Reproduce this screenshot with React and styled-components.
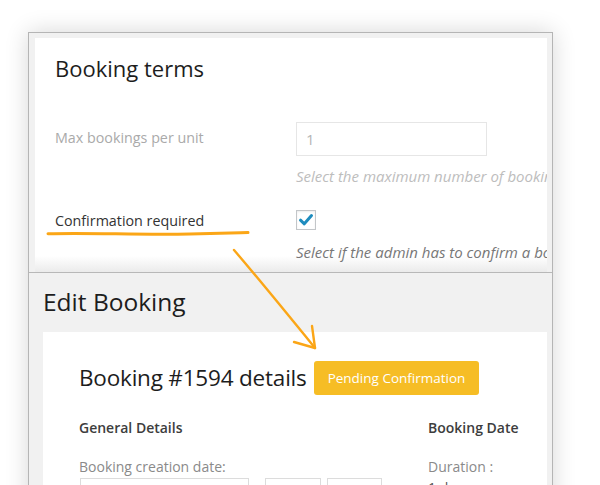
import React from "react";
import styled, { createGlobalStyle } from "styled-components";

const Global = createGlobalStyle`
  html, body { margin: 0; padding: 0; background: #fff; }
  body { font-family: "Open Sans", "Noto Sans", sans-serif; }
  * { box-sizing: border-box; }
`;

const Stage = styled.div`
  position: relative;
  width: 600px;
  height: 485px;
  overflow: hidden;
  background: #fff;
`;

const Window = styled.div`
  margin: 32px 0 0 28px;
  width: 525px;
  height: 520px;
  border: 1px solid #b5b5b5;
  background: #f1f1f1;
  box-shadow: 0 0 22px rgba(0, 0, 0, 0.16);
  display: flex;
  flex-direction: column;
`;

const TopSection = styled.div`
  height: 239px;
  padding: 5px 5px 0 6px;
  display: flex;
`;

const SettingsPanel = styled.div`
  flex: 1;
  overflow: hidden;
  padding: 0 0 0 20px;
  background: linear-gradient(to bottom, #fff calc(100% - 16px), #ebebeb 100%);
`;

const PanelTitle = styled.h2`
  margin: 0;
  padding-top: 15px;
  font-size: 22px;
  font-weight: 400;
  line-height: 30px;
  color: #1d1d1d;
  white-space: nowrap;
`;

const SettingRow = styled.div`
  display: grid;
  grid-template-columns: 241px 1fr;
  margin-top: ${(p) => p.$top}px;
`;

const Label = styled.div`
  font-size: 14.3px;
  line-height: 20px;
  padding-top: ${(p) => p.$pad}px;
  color: ${(p) => (p.$muted ? "#aaaaaa" : "#333")};
  white-space: nowrap;
`;

const Field = styled.div`
  display: flex;
  flex-direction: column;
  align-items: flex-start;
  white-space: nowrap;
`;

const NumberInput = styled.div`
  width: 191px;
  height: 34px;
  border: 1px solid #e6e6e6;
  padding: 0 9px;
  font-size: 15px;
  line-height: 32px;
  color: #b5b5b5;
`;

const Hint = styled.div`
  margin-top: ${(p) => p.$top}px;
  font-size: 15px;
  line-height: 20px;
  font-style: italic;
  color: ${(p) => (p.$muted ? "#bdbdbd" : "#777")};
`;

const CheckBox = styled.div`
  width: 20px;
  height: 20px;
  border: 1px solid #c3c6c9;
  box-shadow: inset 0 1px 2px rgba(0, 0, 0, 0.08);
  background: #fff;
  display: flex;
  align-items: center;
  justify-content: center;
`;

const EditSection = styled.div`
  flex: 1;
  border-top: 1px solid #b8b8b8;
  padding: 0 5px 0 14px;
  display: flex;
  flex-direction: column;
`;

const EditTitle = styled.h1`
  margin: 0;
  padding: 12px 0 0;
  height: 59px;
  font-size: 24.5px;
  font-weight: 400;
  line-height: 34px;
  color: #1d1d1d;
`;

const Card = styled.div`
  flex: 1;
  background: #fff;
  padding: 29px 0 0 36px;
`;

const CardHeader = styled.div`
  display: flex;
  align-items: center;
  gap: 7px;
`;

const CardTitle = styled.h2`
  margin: 0;
  font-size: 22.5px;
  letter-spacing: -0.2px;
  font-weight: 400;
  line-height: 34px;
  color: #1d1d1d;
  white-space: nowrap;
`;

const Badge = styled.span`
  display: inline-flex;
  align-items: center;
  height: 34px;
  padding: 0 14px;
  border-radius: 3px;
  background: #f6bd25;
  color: #fff;
  font-size: 13.5px;
  white-space: nowrap;
`;

const Columns = styled.div`
  display: grid;
  grid-template-columns: 349px 1fr;
  margin-top: 23px;
`;

const Column = styled.div`
  display: flex;
  flex-direction: column;
`;

const ColTitle = styled.div`
  font-size: 14px;
  font-weight: 600;
  line-height: 20px;
  color: #3d3d3d;
  white-space: nowrap;
`;

const FieldLabel = styled.div`
  margin-top: 19px;
  font-size: 14px;
  line-height: 20px;
  color: #8a8a8a;
  white-space: nowrap;
`;

const Value = styled.div`
  margin-top: 2px;
  font-size: 14px;
  line-height: 18px;
  color: #555;
`;

const InputRow = styled.div`
  display: flex;
  margin-top: 1px;
`;

const DateInput = styled.div`
  width: ${(p) => p.$w}px;
  height: 30px;
  margin-left: ${(p) => p.$ml}px;
  border: 1px solid #dcdcdc;
  background: #fff;
`;

const Overlay = styled.svg`
  position: absolute;
  left: 0;
  top: 0;
  pointer-events: none;
`;

export default function App() {
  return (
    <Stage>
      <Global />
      <Window>
        <TopSection>
          <SettingsPanel>
            <PanelTitle>Booking terms</PanelTitle>
            <SettingRow $top={39}>
              <Label $muted $pad={6}>Max bookings per unit</Label>
              <Field>
                <NumberInput>1</NumberInput>
                <Hint $muted $top={10}>Select the maximum number of bookings per unit</Hint>
              </Field>
            </SettingRow>
            <SettingRow $top={24}>
              <Label $pad={1}>Confirmation required</Label>
              <Field>
                <CheckBox>
                  <svg width="16" height="16" viewBox="0 0 16 16">
                    <path d="M2.5 8.2 L6.3 11.8 L13.5 3.6" fill="none" stroke="#1e8cbe" strokeWidth="3" strokeLinecap="round" strokeLinejoin="round" />
                  </svg>
                </CheckBox>
                <Hint $top={12}>Select if the admin has to confirm a booking</Hint>
              </Field>
            </SettingRow>
          </SettingsPanel>
        </TopSection>
        <EditSection>
          <EditTitle>Edit Booking</EditTitle>
          <Card>
            <CardHeader>
              <CardTitle>Booking #1594 details</CardTitle>
              <Badge>Pending Confirmation</Badge>
            </CardHeader>
            <Columns>
              <Column>
                <ColTitle>General Details</ColTitle>
                <FieldLabel>Booking creation date:</FieldLabel>
                <InputRow>
                  <DateInput $w={169} $ml={1} />
                  <DateInput $w={56} $ml={16} />
                  <DateInput $w={55} $ml={6} />
                </InputRow>
              </Column>
              <Column>
                <ColTitle>Booking Date</ColTitle>
                <FieldLabel>Duration :</FieldLabel>
                <Value>1 day</Value>
              </Column>
            </Columns>
          </Card>
        </EditSection>
      </Window>
      <Overlay width="600" height="485" viewBox="0 0 600 485">
        <path d="M48 233.8 C 90 232.5, 140 235.2, 190 234 S 235 233, 248 232.5" fill="none" stroke="#fba617" strokeWidth="3" strokeLinecap="round" />
        <path d="M234 250 C 252 271, 280 305, 315 348" fill="none" stroke="#fba617" strokeWidth="2.4" strokeLinecap="round" />
        <path d="M312 326 L315 348 L294 342" fill="none" stroke="#fba617" strokeWidth="2.4" strokeLinecap="round" strokeLinejoin="round" />
      </Overlay>
    </Stage>
  );
}
